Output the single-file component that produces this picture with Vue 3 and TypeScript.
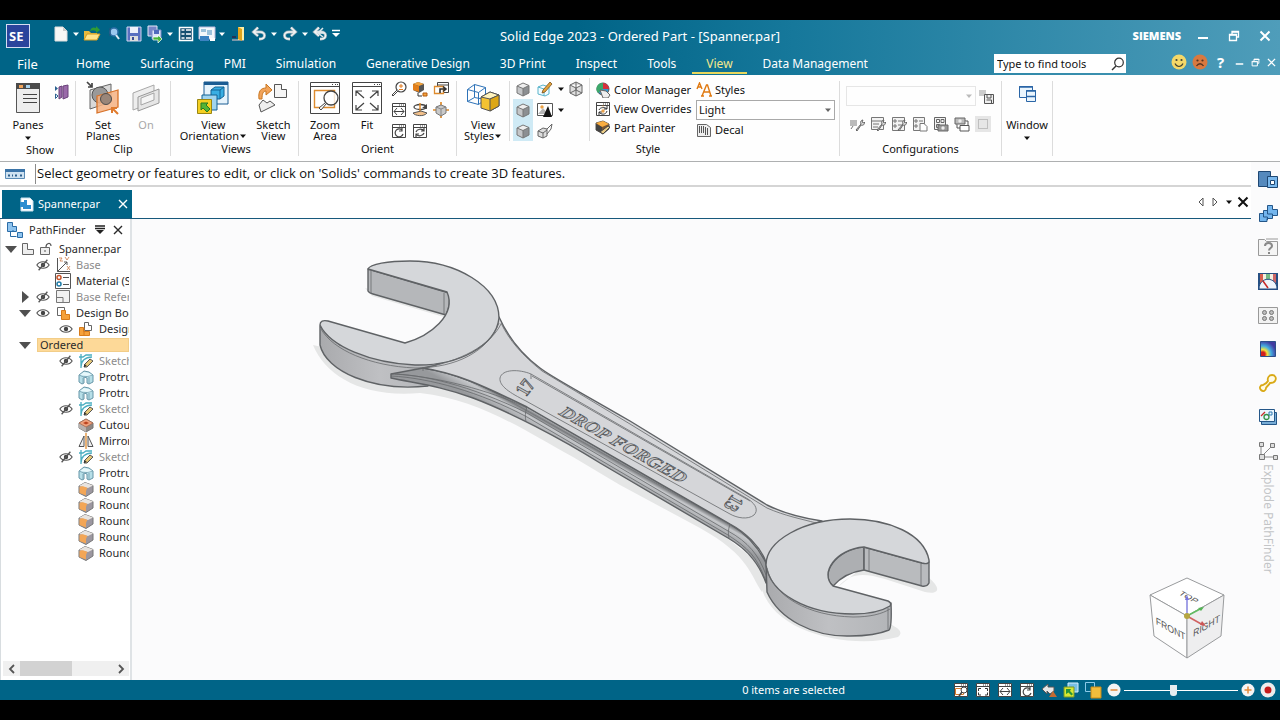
<script setup lang="ts">
import { h, ref } from 'vue'

type Art = [number, number, string]

const win = (inner: string) =>
  `<path d="M1.5 1.5h13v13h-13z" fill="#fff" stroke="#444"/><path d="M2 4.5h12" stroke="#444"/><path d="M8 3h1M10 3h1M12 3h1" stroke="#444"/>${inner}`
const cube = (top: string, left: string, right: string, line = '#777') =>
  `<path d="M2 5l6-3 6 2.500-6 3z" fill="${top}"/><path d="M2 5l6 2.500V15l-6-3z" fill="${left}"/><path d="M14 4.500V12l-6 3V7.500z" fill="${right}"/><path d="M2 5l6-3 6 2.500V12l-6 3-6-3zM2 5l6 2.500 6-3M8 7.500V15" fill="none" stroke="${line}"/>`
const plainCube = cube('#eee', '#c4c6c8', '#8c8f92')
const wrench = '<path d="M7 14l5-6c-1-2 0-4 2-4l-1 2 2 1 1-1c0 2-2 4-4 3l-4 6z" fill="#ddd" stroke="#666"/>'
const eye = '<path d="M1 8c3-5 11-5 14 0-3 5-11 5-14 0z" fill="#fff" stroke="#555" stroke-width="1.300"/><circle cx="8" cy="8" r="2.500" fill="#444"/>'
const doc = '<path d="M2 1h8l4 4v10H2z" fill="#f8f8f6" stroke="#ddd"/><path d="M10 1v4h4" fill="#ccc"/>'
const arrowUndo = '<path d="M3 6h6c6 0 6 7 0 7H8M7 1.500L2.500 6 7 10" fill="none" stroke="#9fb3bd" stroke-width="3"/><path d="M3 6h6c6 0 6 7 0 7H8M7 1.500L2.500 6 7 10" fill="none" stroke="#f4f4f4" stroke-width="1.400"/>'

const art: Record<string, Art> = {
  down: [8, 8, '<path d="M1 2.500h6L4 6z" fill="currentColor"/>'],
  custom: [10, 10, '<path d="M1 1.500h8" stroke="#fff" stroke-width="1.500"/><path d="M1 4h8L5 8z" fill="#fff"/>'],
  blank: [16, 16, doc],
  open: [18, 18, '<path d="M1 15V6h5l2 2h6v7z" fill="#e7b93d"/><path d="M1 15l3-6h13l-3 6z" fill="#ffe48a" stroke="#d39b21"/><path d="M7 6c1-4 4-4 6-3V1l4 4-4 3V6c-2-1-4-1-6 0z" fill="#2f9b35"/>'],
  find: [16, 16, '<circle cx="9" cy="6" r="4" fill="#9cc9ef" stroke="#2e6fa8" stroke-width="1.500"/><path d="M11 9l3 4" stroke="#e0edf6" stroke-width="2"/><path d="M5 2v8" stroke="#28537c"/>'],
  save: [16, 16, '<path d="M1 1h14v14H1z" fill="#5a6fc0" stroke="#d2d8f0"/><path d="M4 1h8v6H4z" fill="#eef0fa"/><path d="M4 10h8v5H4z" fill="#ddd"/><path d="M6 11h2v3H6z" fill="#3c4c94"/>'],
  copies: [18, 18, '<path d="M2 1h9v10H2z" fill="#7686c8" stroke="#e4e7f5"/><path d="M6 5h9v9H6z" fill="#dfe5f8" stroke="#7d8cc8"/><path d="M8 5h5v4H8z" fill="#516bbd"/><path d="M7 12h5v-2l4 4-4 4v-3H7z" fill="#48b53b" stroke="#fff" stroke-width=".7"/>'],
  list: [16, 16, '<path d="M1.500 1.500h13v13h-13z" fill="#164f70" stroke="#fff" stroke-width="1.500"/><path d="M3.500 4h3M3.500 8h3M3.500 12h3M8 4h5M8 8h5M8 12h5" stroke="#fff" stroke-width="1.500"/>'],
  layout: [18, 16, '<path d="M1 1h16v12H1z" fill="#f4f8fb" stroke="#bbd"/><path d="M3 3h5v3H3zM9 4h5v5H9z" fill="#9dc3dc"/><path d="M2 10h9v5H2z" fill="#3b83c2"/><path d="M12 12h5v3h-5z" fill="#fff"/>'],
  exit: [16, 16, '<path d="M2 13h6V2h6v13H2z" fill="#7997a8"/><path d="M8 1h6v13H8z" fill="#fff0a5"/><path d="M8 1l4 2v12l-4-2z" fill="#dfa51c"/><path d="M2 11l4 0" stroke="#235" stroke-width="2"/>'],
  undo: [16, 16, arrowUndo],
  redo: [16, 16, `<g transform="translate(16 0) scale(-1 1)">${arrowUndo}</g>`],
  undoall: [18, 16, `${arrowUndo}<path d="M11 2L6 7h7M6 7l5 4" fill="none" stroke="#dfe7eb" stroke-width="1.500"/>`],
  min: [12, 12, '<path d="M1 8h10" stroke="#fff" stroke-width="2"/>'],
  restore: [12, 12, '<path d="M1.500 4.500h7v6h-7zM4 4V1.500h6.500V7H9" fill="none" stroke="#fff" stroke-width="1.300"/><path d="M1 5h8M4 2h7" stroke="#fff" stroke-width="1.500"/>'],
  close: [12, 12, '<path d="M1.500 1.500l9 9m0-9l-9 9" stroke="currentColor" stroke-width="2"/>'],
  thinx: [10, 10, '<path d="M1 1l8 8m0-8L1 9" stroke="currentColor" stroke-width="1.400"/>'],
  happy: [16, 16, '<circle cx="8" cy="8" r="7.500" fill="#f5d868"/><circle cx="5.500" cy="6" r="1.100" fill="#443"/><circle cx="10.500" cy="6" r="1.100" fill="#443"/><path d="M4 9.500c2 4 6 4 8 0" fill="none" stroke="#443" stroke-width="1.200"/>'],
  sad: [16, 16, '<circle cx="8" cy="8" r="7.500" fill="#d9793f"/><circle cx="5.500" cy="6.500" r="1.100" fill="#532"/><circle cx="10.500" cy="6.500" r="1.100" fill="#532"/><path d="M4.500 12c2-3 5-3 7 0" fill="none" stroke="#532" stroke-width="1.300"/>'],
  lens: [14, 14, '<circle cx="8" cy="5.500" r="4.300" fill="none" stroke="#333" stroke-width="1.200"/><path d="M5 9l-4 4" stroke="#333" stroke-width="1.400"/>'],
  panes: [26, 32, '<path d="M1.500 1.500h23v29h-23z" fill="#eee" stroke="#555"/><path d="M1 1h24v6H1z" fill="#4b4b4b"/><path d="M4 3h4v3H4z" fill="#f0a35a"/><path d="M11 3h4v3h-4z" fill="#a9d3ef"/><path d="M8 12.500h14M8 16.500h14M8 20.500h14" stroke="#444"/>'],
  swap: [16, 16, '<path d="M5 3l3-1v11l-3 2zM9 2l5-1v12l-5 2z" fill="#9a6aa9" stroke="#6a427b"/><path d="M1 2v5l3-2.500z" fill="#2b6290"/><path d="M1.500 10v4.500L4 12z" fill="#fff" stroke="#2b6290"/>'],
  planes: [34, 34, '<path d="M4 9l21-6v18L4 28z" fill="#d9d9d9" stroke="#666"/><ellipse cx="14" cy="14" rx="8" ry="8" fill="#999" stroke="#555"/><path d="M11 15l21-6v17L11 32z" fill="#f5b183" fill-opacity=".85" stroke="#d8732a" stroke-width="1.300"/><circle cx="20" cy="18" r="5.500" fill="#9a8679" stroke="#4d4d4d"/><path d="M1 1l5 5M6 2v4H2" fill="none" stroke="#444" stroke-width="1.700"/><path d="M32 33l-5-5M26 32v-5h5" fill="none" stroke="#e07b2e" stroke-width="2"/>'],
  planeoff: [30, 32, '<path d="M2 11L23 3v17L2 28z" fill="#eee" stroke="#a8a8a8"/><path d="M7 15l21-8v14L7 29z" fill="#e6e6e6" stroke="#999"/><path d="M10 16l13-5v7l-13 5z" fill="#f5f5f5" stroke="#a5a5a5"/>'],
  orient: [34, 34, '<path d="M8 1h24v22H8z" fill="#e6f3fc" stroke="#1b5c93"/><path d="M8 1h24v3H8z" fill="#1b5c93"/><path d="M15 9l4-3h9v9l-4 3h-9z" fill="#39aee3" stroke="#126395"/><path d="M15 9h9v9M24 9l4-3" stroke="#126395" fill="none"/><path d="M6 14h15v15H6z" fill="#a0d4ef" stroke="#126395"/><path d="M1.500 18.500h14v14h-14z" fill="#f4cf22" stroke="#9a8612"/><path d="M5 22h7l-2 2 4 4-3 3-4-4-2 2z" fill="#54b436" stroke="#277a23"/>'],
  sketchview: [32, 32, '<path d="M17.500 2.500h7v5h5v8h-12z" fill="#f5f5f5" stroke="#555"/><path d="M2 23l4-5 4 3 3-2 5 4-14 7z" fill="#eee" stroke="#555"/><path d="M2 17C1 9 4 6 9 6V2l6 6-6 5v-4c-3 0-4 3-4 8z" fill="#f2a45b" stroke="#c97620"/>'],
  zoomarea: [32, 34, '<path d="M1.500 1.500h29v31h-29z" fill="#fff" stroke="#444"/><path d="M2 5.500h28M23 3.500h1M26 3.500h1M28 3.500h1" stroke="#444"/><path d="M5.500 9.500h20v17h-20z" fill="none" stroke="#dd8b2e" stroke-width="1.400"/><circle cx="22" cy="17" r="7" fill="#fff" fill-opacity=".8" stroke="#444" stroke-width="1.300"/><path d="M17 23l-5 6-2-2 6-5" fill="#fff" stroke="#444"/>'],
  fit: [32, 34, '<path d="M1.500 1.500h29v31h-29z" fill="#fff" stroke="#444"/><path d="M2 5.500h28M23 3.500h1M26 3.500h1M28 3.500h1" stroke="#444"/><path d="M5 10l8 7M5 15v-5h6M27 10l-8 7M21 10h6v5M5 29l8-7M5 24v5h6M27 29l-8-7M21 29h6v-5" fill="none" stroke="#444" stroke-width="1.200"/>'],
  zoom: [16, 16, '<circle cx="10" cy="6" r="5" fill="#fff" stroke="#444" stroke-width="1.200"/><path d="M7 10l-5 5-1-1 5-5" fill="#fff" stroke="#444"/><path d="M8 5h4M10 3v4M8 8.500h4" stroke="#e07b20"/>'],
  rotcube: [16, 16, '<path d="M1 3l5-2 6 2v6l-5 3-6-3z" fill="#555"/><path d="M1 3l5-2 6 2-5 2z" fill="#f6a33b"/><path d="M1 3l6 2v6l-6-2z" fill="#e37e19"/><path d="M11 12h4v3h-4z" fill="#f6a33b" stroke="#b35b11"/><path d="M6 12v3h4" fill="none" stroke="#333"/>'],
  winarrow: [16, 16, '<path d="M4.500 1.500h11v10h-11z" fill="#fff" stroke="#444"/><path d="M5 4h10" stroke="#444"/><path d="M1.500 5.500h9v7h-9z" fill="#fff" stroke="#dd8b2e" stroke-width="1.300"/><path d="M7 12V8h5M10 5.500l3 2.500-3 2.500" fill="none" stroke="#333" stroke-width="1.600"/>'],
  pan: [16, 16, win('<path d="M6 6L3 9.500 6 13M10 6l3 3.500L10 13M3 9.500h10" fill="none" stroke="#444"/>')],
  spin: [16, 16, '<ellipse cx="8" cy="5" rx="6" ry="2.500" fill="none" stroke="#444" stroke-width="1.300"/><path d="M8 1v12" stroke="#e08a28" stroke-width="1.500"/><path d="M1 11c2 3 11 4 14 0l-6-2z" fill="#f2c08a" stroke="#555"/><path d="M15 2v5l-5-1z" fill="#444"/>'],
  look: [16, 16, '<path d="M8 0v3M8 13v3M0 8h3M13 8h3" stroke="#e08a28" stroke-width="1.700"/><path d="M3 5l5-2 5 2v6l-5 3-5-3z" fill="#c9c9c9" stroke="#777"/><path d="M3 5l5 2 5-2M8 7v7" fill="none" stroke="#888"/>'],
  rot: [16, 16, win('<path d="M11 7a4 4 0 1 0 1 4M11 5v3H8" fill="none" stroke="#444" stroke-width="1.200"/>')],
  refresh: [16, 16, win('<path d="M4 9c1-3 6-4 8-1M12 5v3H9M12 10c-1 3-6 4-8 1M4 14v-3h3" fill="none" stroke="#444" stroke-width="1.200"/>')],
  viewstyles: [34, 32, '<path d="M1.500 7.500l7-5 11 3v12l-7 5-11-3zM1.500 7.500l11 3 7-5M12.500 10.500v12M8.500 2.500v13l-7 4M8.500 15.500l11 2" fill="none" stroke="#2e73b8"/><path d="M15 15l9-5 9 3v11l-9 5-9-3z" fill="#f4c332" stroke="#555"/><path d="M15 15l9-5 9 3-9 4z" fill="#fff3bd" stroke="#555"/><path d="M24 17v12l9-5V13z" fill="#dda715" stroke="#555"/>'],
  cube: [16, 16, plainCube],
  wire: [16, 16, '<path d="M2 4l6-3 6 3v8l-6 3-6-3zM2 4l6 3 6-3M8 7v8M2 12l6-3 6 3M8 1v8" fill="#ccc" fill-opacity=".6" stroke="#666"/>'],
  painted: [16, 16, '<path d="M1 6l5-2 6 2v7l-4 2-7-2zM1 6l6 2 5-2M7 8v7" fill="#f2fbff" stroke="#5bb5cc"/><path d="M6 9l7-8 2 2-7 8-3 1z" fill="#e3a33d" stroke="#79501c" stroke-width=".8"/>'],
  scene: [16, 16, '<path d="M.5 1.500h15v12H.5z" fill="#fff" stroke="#555"/><circle cx="5" cy="5" r="1.700" fill="#eda143"/><path d="M1 12l5-6 5 6z" fill="#b8b8b8"/><path d="M6 15l5-11 4 11z" fill="#151515"/>'],
  section: [16, 16, '<path d="M1 8l5-3 4 1v7l-4 2-5-2z" fill="#ddd" stroke="#666"/><path d="M1 8l5 2 4-3M6 10v5M10 6l5-5-1 5-4 5" fill="none" stroke="#666"/>'],
  palette: [16, 16, '<circle cx="8" cy="7" r="6" fill="#3b96c9" stroke="#555"/><path d="M8 7V1a6 6 0 0 1 6 6z" fill="#d8303b"/><path d="M8 7L3 11A6 6 0 0 1 8 1z" fill="#3ca86b"/><path d="M5 8l6 1 4 4-2 3H8z" fill="#eee" stroke="#666"/>'],
  overrides: [16, 16, win('<path d="M4 9c1-3 6-3 8-1M12 5v3H9M12 10c-1 4-6 4-8 1M4 14v-3h3" fill="none" stroke="#333"/><path d="M8 4.500v1" stroke="#e08a28"/><circle cx="8" cy="10" r="1.700" fill="#e9a24c"/>')],
  painter: [16, 16, '<path d="M1 3l7-2 6 3v5l-6 5-7-4z" fill="#7c5630" stroke="#555"/><path d="M1 3l7-2 6 3-7 3z" fill="#f9ad40"/><path d="M1 4l6 3v6l-6-3z" fill="#434343"/><path d="M5 12l8-6 2 1-7 7z" fill="#e9cc87" stroke="#444"/>'],
  aa: [16, 16, '<path d="M1 7l2.500-6L6 7M2 5h3M6 14l4.500-11h1L15 14M8 10h5.500M5 14h3M13 14h3" fill="none" stroke="#e07a12" stroke-width="1.400"/>'],
  decal: [16, 16, '<path d="M1.500 2.500h9l4 3v9h-13z" fill="#eee" stroke="#666"/><path d="M3.500 4v7M5.500 4v7M7.500 4v7M9.500 5v8M11.500 6v7" stroke="#555"/>'],
  cfgsave: [16, 16, '<path d="M0 1h7v6H0z" fill="#ccc"/><path d="M5.500 5.500h9v9h-9z" fill="#eee" stroke="#555"/><path d="M8 6v3h4V6M7.500 11h5v3" fill="none" stroke="#555"/>'],
  cfg1: [16, 16, `<path d="M1 4h7v6H1z" fill="#bbb"/>${wrench}<path d="M2 13l2-3" stroke="#777"/>`],
  cfg2: [16, 16, `<path d="M1.500 1.500h12v12h-12zM1 5h13M3 8h6M3 11h5" fill="#f3f3f3" stroke="#777"/>${wrench}`],
  cfg3: [16, 16, `<path d="M1.500 1.500h12v13h-12zM3 4h2v2H3zM3 9h2v2H3zM7 5h5M7 9h5" fill="#f3f3f3" stroke="#777"/>${wrench}`],
  cfg4: [16, 16, '<path d="M1.500 1.500h11v13h-11zM3 4h2v2H3zM3 9h2v2H3zM7 5h4" fill="#f3f3f3" stroke="#777"/><path d="M8 7.500h4l3 3V15H8z" fill="#fff" stroke="#777"/>'],
  cfg5: [16, 16, '<path d="M1.500 1.500h11v12h-11zM3.500 3.500h3v3h-3zM8 3.500h3v3H8zM3.500 8.500h3v3h-3z" fill="#f3f3f3" stroke="#666"/><path d="M5 9h10v6H5z" fill="#999" stroke="#666"/><circle cx="10" cy="12" r="1.700" fill="#eee"/>'],
  cfg6: [16, 16, '<path d="M1 2h10v6H1z" fill="#bbb" stroke="#666"/><circle cx="6" cy="5" r="1.700" fill="#eee"/><path d="M6 9.500h9V15H6zM3 8v4h3M11 5h3v4" fill="#fff" stroke="#555"/>'],
  cfg7: [16, 16, '<path d="M0 0h16v16H0z" fill="#e6e6e6"/><path d="M3.500 3.500h9v9h-9z" fill="none" stroke="#999" stroke-dasharray="1 1"/>'],
  windows: [18, 18, '<path d="M1.500 1.500h13v11h-13z" fill="#eaf5fd" stroke="#2a65a6"/><path d="M1 2h14" stroke="#2a65a6" stroke-width="1.500"/><path d="M8.500 5.500h9v11h-9z" fill="#eaf5fd" stroke="#2a65a6"/><path d="M8 6h10M8 11.500h10" stroke="#2a65a6" stroke-width="1.500"/>'],
  solidbar: [20, 10, '<path d="M.5.500h19v9H.5z" fill="#cfe2f1" stroke="#5a8bb5"/><path d="M0 0h20v3H0z" fill="#3b74a8"/><path d="M3 6.500h2M7 6.500h1M10 6.500h2M15 6.500h2" stroke="#2d5e8c" stroke-width="2"/>'],
  partdoc: [14, 15, '<path d="M1 1h9l3 3v10H1z" fill="#fff" stroke="#c8dfec"/><path d="M0 5h4V3h3v5h4v4H3v-2H0z" fill="#2c8dd0"/>'],
  pathfinder: [18, 18, '<path d="M1.500 1.500h5v4h4v5h-9z" fill="#8fc4ef" stroke="#2b6ca6"/><path d="M4.500 11v4.500h6M7 10v-1" stroke="#2b6ca6" fill="none"/><path d="M11.500 11.500h5v5h-5z" fill="#8fc4ef" stroke="#2b6ca6"/>'],
  menu: [12, 10, '<path d="M1 1h10M1 3.500h10" stroke="#222" stroke-width="1.300"/><path d="M2 5h8L6 9z" fill="#222"/>'],
  open6: [12, 12, '<path d="M0 3h12L6 10z" fill="#505050"/>'],
  shut6: [12, 12, '<path d="M3 0v12l7-6z" fill="#505050"/>'],
  part: [14, 14, '<path d="M1.500 1.500h5v6h6v5h-11z" fill="#eee" stroke="#666"/>'],
  lock: [14, 14, '<path d="M1.500 5.500h9v7h-9z" fill="#eee" stroke="#666"/><path d="M7 5c0-4 5-5 5-1M5 9h2" fill="none" stroke="#555" stroke-width="1.200"/>'],
  eye: [14, 14, `<g transform="scale(.875)">${eye}</g>`],
  hidden: [14, 14, `<g transform="scale(.875)">${eye}<path d="M3 14L13 2" stroke="#555" stroke-width="1.500"/></g>`],
  base: [16, 16, '<path d="M2.500 1v13.500H15M2.500 14.500L12 5M9 5h3v3" fill="none" stroke="#555"/><path d="M4 1h3L5 4h3M10 0l2 3 2-3M12 9l3 4M15 9l-3 4" fill="none" stroke="#cc7c4a" stroke-width=".8"/>'],
  material: [16, 16, '<path d="M.5.500h15v15H.5z" fill="#fff" stroke="#555"/><circle cx="4" cy="4.500" r="2" fill="none" stroke="#c8552c" stroke-width="1.500"/><circle cx="4" cy="11" r="2" fill="none" stroke="#1e7ca7" stroke-width="1.500"/><path d="M8 4.500h6M8 11.500h6" stroke="#555"/>'],
  refs: [16, 16, '<path d="M1.500 1.500h13v12h-13z" fill="#f1f1f1" stroke="#777"/><path d="M2 8.500h6v5" fill="none" stroke="#777"/>'],
  bodies: [16, 16, '<path d="M2.500 2.500h7v8h-7z" fill="#fff" stroke="#666"/><path d="M6.500 5.500h4v4h4v5h-8z" fill="#f5a13a" stroke="#d77b1b"/>'],
  body: [16, 16, '<path d="M6.500 1.500h4v3h3v5h-7z" fill="#fff" stroke="#666"/><path d="M1.500 6.500h4v4h6v4h-10z" fill="#f5a13a" stroke="#d77b1b"/><path d="M6 7v7" stroke="#d77b1b"/>'],
  sketch: [16, 16, '<path d="M3 1v14M1 4h4l3-2h6M3 14C3 8 7 4 14 4" fill="none" stroke="#4baec1" stroke-width="1.300"/><path d="M7 11l5-5 3 2-6 6-3 0z" fill="#e5c778" stroke="#555"/><path d="M6 14l0-3 3 2z" fill="#333"/>'],
  protrude: [16, 16, '<path d="M1 6l5-4 5 1 4 3v7l-4 2-2-1V9L6 8v6l-2 1-3-2z" fill="#b7dfe8" stroke="#6796a8"/><path d="M1 6l5 2 9-2M5 9v6M11 8v7" fill="none" stroke="#7fa9b8"/><path d="M2 6l4-3 5 1 3 2-5 1z" fill="#e7f8fb"/>'],
  cutout: [16, 16, '<path d="M1 6l7-4 7 4v5l-7 4-7-4z" fill="#8f8783" stroke="#777"/><path d="M1 6l7 4v5l-7-4z" fill="#b7b1ae"/><path d="M1 6l7-4 7 4-7 4z" fill="#f0a17d" stroke="#a5664a" stroke-width=".7"/><path d="M5 6l3-1.500L11 6 8 7.500z" fill="#bb4420"/>'],
  mirror: [16, 16, '<path d="M6 3v10.500H1zM10 3v10.500h5z" fill="#eee" stroke="#555"/><path d="M8 0v16" stroke="#df8b2f" stroke-width="1.300"/>'],
  round: [16, 16, '<path d="M1 5l6-3.500 8 3V11l-7 4.500L1 12z" fill="#9c97a0" stroke="#777"/><path d="M1 5l6-3.500 8 3-5 2.500z" fill="#e8e4e0"/><path d="M1.500 6c2-1.500 4-1 8 1-2 2-1.500 5-1.500 7.500L1.500 12z" fill="#f3a656"/>'],
  left: [8, 10, '<path d="M6 1L2 5l4 4" fill="none" stroke="#555" stroke-width="1.800"/>'],
  right: [8, 10, '<path d="M2 1l4 4-4 4" fill="none" stroke="#555" stroke-width="1.800"/>'],
  prev: [8, 10, '<path d="M6 1v8L2 5z" fill="#fff" stroke="#555"/>'],
  next: [8, 10, '<path d="M2 1v8l4-4z" fill="#fff" stroke="#555"/>'],
  rail1: [20, 18, '<path d="M.5 1.500h12v15H.5z" fill="#5589bd" stroke="#1e4773"/><path d="M9.500 6.500h10v11h-10z" fill="#79b7ec" stroke="#1e4773"/><path d="M12.500 10.500h4v4h-4z" fill="#fff" stroke="#1e4773"/>'],
  rail2: [20, 18, '<path d="M1.500 9.500h4v-3h4v-5h5v4h5v6h-5v3H9v3H1.500z" fill="#73b5ed" stroke="#245688"/><path d="M5.500 9v4h4v3M9.500 6v4h5v4" fill="none" stroke="#245688"/>'],
  rail3: [20, 18, '<path d="M.5 17.500V1.500h6l2 2h11v14z" fill="#f4f4f4" stroke="#999"/><path d="M8 1h12" stroke="#999"/><path d="M7 8c0-4 7-4 7 0 0 2-3 2-3 4.500M11 14v2" fill="none" stroke="#888" stroke-width="2"/>'],
  rail4: [20, 18, '<path d="M0 1h20v17H0z" fill="#264f83"/><path d="M2 2h3v9H2z" fill="#d85e4f"/><path d="M5 2h3v6H5z" fill="#f4eee1"/><path d="M8 2h4v5H8z" fill="#75b984"/><path d="M12 2h3v6h-3z" fill="#f4eee1"/><path d="M15 2h3v9h-3z" fill="#c66"/><path d="M1 17c0-13 18-13 18 0z" fill="#eef5fc" stroke="#264f83"/><path d="M10 16L5 9" stroke="#c62626" stroke-width="1.500"/>'],
  rail5: [20, 18, '<path d="M.5 1.500h19v16H.5z" fill="#f2f2f2" stroke="#999"/><g fill="#bbb" stroke="#777"><circle cx="6.500" cy="6.500" r="2"/><circle cx="13.500" cy="6.500" r="2"/><circle cx="6.500" cy="12.500" r="2"/><circle cx="13.500" cy="12.500" r="2"/></g>'],
  rail6: [16, 16, '<defs><radialGradient id="heat" cx="15%" cy="85%" r="100%"><stop offset=".15" stop-color="#d0201f"/><stop offset=".3" stop-color="#f7e43a"/><stop offset=".55" stop-color="#43aee2"/><stop offset=".9" stop-color="#413aa0"/></radialGradient></defs><path d="M.5.500h15v15H.5z" fill="url(#heat)" stroke="#2c4f89"/>'],
  rail7: [18, 18, '<path d="M9 7c-1-3 1-6 4-6 3 0 5 3 3 6-1 2-3 2-5 2-1 2-3 3-4 5 0 3-3 4-5 2-2-2-1-5 2-5 2-1 4-2 5-4z" fill="#fffbe5" stroke="#d9a916" stroke-width="1.800"/>'],
  rail8: [20, 18, '<path d="M3.500 4.500h15v12h-15z" fill="#77acd6" stroke="#245688"/><path d="M1.500 1.500h15v12h-15z" fill="#eaf6ff" stroke="#245688"/><path d="M3 8l4-4" stroke="#c92d2d" stroke-width="1.300"/><circle cx="8.500" cy="9" r="2.500" fill="none" stroke="#349247" stroke-width="1.300"/><path d="M11 4h3v3h-3z" fill="none" stroke="#2f7bb3"/>'],
  rail9: [20, 18, '<path d="M3 4v11h14M3 15l11-11" fill="none" stroke="#888"/><g fill="#ddd" stroke="#777"><path d="M1.500.500h4v4h-4zM12.500 1.500h4v4h-4zM1.500 12.500h5v5h-5zM15.500 13.500h4v4h-4z"/></g>'],
  szoom: [16, 16, win('<path d="M2.500 6.500h8v6h-8z" fill="none" stroke="#d77b2b"/><circle cx="11" cy="8" r="3" fill="#fff" stroke="#444"/><path d="M9 10l-3 4" stroke="#444" stroke-width="1.500"/>')],
  sfit: [16, 16, win('<path d="M3.500 9V6.500H6M10 6.500h2.500V9M3.500 10.500V13H6M12.500 10.500V13H10" fill="none" stroke="#333"/>')],
  sback: [16, 16, '<path d="M1 7l6-5v3h6v4l-4 3-3-3v3z" fill="#e8e8e8" stroke="#555"/><path d="M12 9l4 6H8z" fill="#c26b32"/>'],
  sorient: [16, 16, '<path d="M5 1h10v9H5z" fill="#77bfe4" stroke="#d8f0ff"/><path d="M1 5h10v10H1z" fill="#d7e832" stroke="#779629"/><path d="M3 7h5L7 9l3 3-1.500 1.500-3-3L3 12z" fill="#289439"/>'],
  sstyle: [18, 18, '<path d="M1.500 1.500h9v9h-9z" fill="none" stroke="#8ac9e8"/><path d="M7 6h10v11H7z" fill="#f0bd3c" stroke="#c98a14"/>'],
  minus: [14, 14, '<circle cx="7" cy="7" r="6.500" fill="#f4f4f4"/><path d="M3.500 7h7" stroke="#e28a3a" stroke-width="1.500"/>'],
  plus: [14, 14, '<circle cx="7" cy="7" r="6.500" fill="#f4f4f4"/><path d="M3.500 7h7M7 3.500v7" stroke="#e28a3a" stroke-width="1.500"/>'],
  record: [16, 16, '<circle cx="8" cy="8" r="7.500" fill="#ececec"/><circle cx="8" cy="8" r="3.500" fill="#c31b1b"/>']
}

const Icon = (props: { n: string }) => {
  const [w, hgt, markup] = art[props.n]
  return h('svg', { width: w, height: hgt, viewBox: `0 0 ${w} ${hgt}`, innerHTML: markup, 'aria-hidden': 'true' })
}
Icon.props = ['n']

const quick = [
  ['blank', 'New'], ['down', 'New options'], ['open', 'Open'], ['find', 'Find'], ['save', 'Save'], ['copies', 'Save all'],
  ['down', 'Save options'], ['list', 'Properties'], ['layout', 'Layout'], ['down', 'Layout options'], ['exit', 'Close'],
  ['undo', 'Undo'], ['down', 'Undo list'], ['redo', 'Redo'], ['down', 'Redo list'], ['undoall', 'Repeat'], ['custom', 'Customize']
]
const tabs = ['Home', 'Surfacing', 'PMI', 'Simulation', 'Generative Design', '3D Print', 'Inspect', 'Tools', 'View', 'Data Management']
const orientTools = ['zoom', 'rotcube', 'winarrow', 'pan', 'spin', 'look', 'rot', 'refresh']
const configTools = ['cfg1', 'cfg2', 'cfg3', 'cfg4', 'cfg5', 'cfg6', 'cfg7']
const rail = ['rail1', 'rail2', 'rail3', 'rail4', 'rail5', 'rail6', 'rail7', 'rail8', 'rail9']
const statusTools = ['szoom', 'sfit', 'pan', 'rot', 'sback', 'sorient', 'sstyle']

interface Node { t: string; i?: string; d: number; e?: string; x?: string; off?: boolean; hot?: boolean }
const sk: Node = { t: 'Sketch', i: 'sketch', d: 3, e: 'hidden', off: true }
const pr: Node = { t: 'Protrusion', i: 'protrude', d: 3 }
const ro: Node = { t: 'Round', i: 'round', d: 3 }
const tree: Node[] = [
  { t: 'Base', i: 'base', d: 2, e: 'hidden', off: true },
  { t: 'Material (Steel)', i: 'material', d: 2 },
  { t: 'Base Reference Planes', i: 'refs', d: 2, e: 'hidden', x: 'shut6', off: true },
  { t: 'Design Bodies', i: 'bodies', d: 2, e: 'eye', x: 'open6' },
  { t: 'Design Body', i: 'body', d: 3, e: 'eye' },
  { t: 'Ordered', d: 1, x: 'open6', hot: true },
  sk, pr, pr, sk, { t: 'Cutout', i: 'cutout', d: 3 }, { t: 'Mirror', i: 'mirror', d: 3 }, sk, pr, ro, ro, ro, ro, ro
]

const query = ref('Type to find tools')
const zoomLevel = ref(43)
const style = ref('Light')
</script>

<template>
  <div class="app">
    <header class="head">
      <div class="titlebar">
        <div class="quick">
          <button class="logo" aria-label="Application menu">SE</button>
          <button v-for="(q, k) in quick" :key="k" :class="q[0] === 'down' || q[0] === 'custom' ? 'qc' : 'qb'" :aria-label="q[1]"><Icon :n="q[0]" /></button>
        </div>
        <h1>Solid Edge 2023 - Ordered Part - [Spanner.par]</h1>
        <div class="wctl">
          <strong>SIEMENS</strong>
          <button aria-label="Minimize"><Icon n="min" /></button>
          <button aria-label="Restore"><Icon n="restore" /></button>
          <button aria-label="Close"><Icon n="close" /></button>
        </div>
      </div>
      <nav class="tabs">
        <button class="file">File</button>
        <button v-for="t in tabs" :key="t" class="tab" :class="{ on: t === 'View' }">{{ t }}</button>
        <label class="search"><input v-model="query" type="text" aria-label="Find tools" /><Icon n="lens" /></label>
        <div class="help">
          <button aria-label="Like"><Icon n="happy" /></button>
          <button aria-label="Dislike"><Icon n="sad" /></button>
          <button aria-label="Help" class="q">?</button>
          <button aria-label="Minimize document" class="sm"><Icon n="min" /></button>
          <button aria-label="Restore document" class="sm"><Icon n="restore" /></button>
          <button aria-label="Close document" class="sm"><Icon n="thinx" /></button>
        </div>
      </nav>
    </header>

    <div class="ribbon">
      <section class="group show">
        <div class="body">
          <button class="big"><Icon n="panes" /><span>Panes</span><Icon n="down" class="below" /></button>
          <button class="tiny" aria-label="Swap panes"><Icon n="swap" /></button>
        </div>
        <h2>Show</h2>
      </section>
      <section class="group clip">
        <div class="body">
          <button class="big"><Icon n="planes" /><span>Set<br />Planes</span></button>
          <button class="big dim" disabled><Icon n="planeoff" /><span>On</span></button>
        </div>
        <h2>Clip</h2>
      </section>
      <section class="group views">
        <div class="body">
          <button class="big wide"><Icon n="orient" /><span>View<br />Orientation<Icon n="down" /></span></button>
          <button class="big"><Icon n="sketchview" /><span>Sketch<br />View</span></button>
        </div>
        <h2>Views</h2>
      </section>
      <section class="group orient">
        <div class="body">
          <button class="big"><Icon n="zoomarea" /><span>Zoom<br />Area</span></button>
          <button class="big"><Icon n="fit" /><span>Fit</span></button>
          <div class="grid3">
            <button v-for="o in orientTools" :key="o" class="tiny" :aria-label="o"><Icon :n="o" /></button>
          </div>
        </div>
        <h2>Orient</h2>
      </section>
      <section class="group style">
        <div class="body">
          <button class="big vs"><Icon n="viewstyles" /><span>View<br />Styles<Icon n="down" /></span></button>
          <div class="cubes">
            <button class="tiny" aria-label="Shaded"><Icon n="cube" /></button>
            <button class="tiny" aria-label="Visible edges"><Icon n="painted" /></button>
            <button class="car" aria-label="Edge options"><Icon n="down" /></button>
            <button class="tiny" aria-label="Wireframe"><Icon n="wire" /></button>
            <button class="tiny sel" aria-label="Drop shadow"><Icon n="cube" /></button>
            <button class="tiny" aria-label="Background"><Icon n="scene" /></button>
            <button class="car" aria-label="Background options"><Icon n="down" /></button>
            <i></i>
            <button class="tiny sel" aria-label="Floor shadow"><Icon n="cube" /></button>
            <button class="tiny" aria-label="Perspective"><Icon n="section" /></button>
          </div>
          <div class="rows left">
            <button><Icon n="palette" />Color Manager</button>
            <button><Icon n="overrides" />View Overrides</button>
            <button><Icon n="painter" />Part Painter</button>
          </div>
          <div class="rows">
            <button><Icon n="aa" />Styles</button>
            <div class="pick"><select v-model="style" aria-label="Style"><option>Light</option></select><Icon n="down" /></div>
            <button><Icon n="decal" />Decal</button>
          </div>
        </div>
        <h2>Style</h2>
      </section>
      <section class="group config">
        <div class="body">
          <div class="crow">
            <div class="pick off"><select disabled aria-label="Configuration"><option></option></select><Icon n="down" /></div>
            <button class="tiny" aria-label="Save configuration"><Icon n="cfgsave" /></button>
          </div>
          <div class="crow tools">
            <button v-for="c in configTools" :key="c" class="tiny" :aria-label="c"><Icon :n="c" /></button>
          </div>
        </div>
        <h2>Configurations</h2>
      </section>
      <section class="group windowg">
        <div class="body">
          <button class="big"><Icon n="windows" class="wi" /><span>Window</span><Icon n="down" class="below" /></button>
        </div>
      </section>
    </div>

    <div class="middle">
      <div class="work">
        <div class="prompt"><Icon n="solidbar" /><p>Select geometry or features to edit, or click on 'Solids' commands to create 3D features.</p></div>
        <div class="docs">
          <div class="doctab"><Icon n="partdoc" /><span>Spanner.par</span><button aria-label="Close Spanner.par"><Icon n="thinx" /></button></div>
          <div class="docnav">
            <button aria-label="Previous"><Icon n="prev" /></button>
            <button aria-label="Next"><Icon n="next" /></button>
            <button aria-label="Documents"><Icon n="down" /></button>
            <button aria-label="Close view"><Icon n="close" /></button>
          </div>
        </div>
        <div class="stage">
          <aside class="finder">
            <div class="fhead"><Icon n="pathfinder" /><span>PathFinder</span><button aria-label="Options"><Icon n="menu" /></button><button aria-label="Close PathFinder"><Icon n="thinx" /></button></div>
            <div class="node root"><Icon n="open6" /><Icon n="part" /><Icon n="lock" /><span>Spanner.par</span></div>
            <ul>
              <li v-for="(n, k) in tree" :key="k" class="node" :class="['d' + n.d, { off: n.off }]">
                <b class="exp"><Icon v-if="n.x" :n="n.x" /></b>
                <b v-if="n.d > 1" class="vis"><Icon v-if="n.e" :n="n.e" /></b>
                <b v-if="n.i" class="pic"><Icon :n="n.i" /></b>
                <span :class="{ hot: n.hot }">{{ n.t }}</span>
              </li>
            </ul>
            <div class="hbar"><button aria-label="Scroll left"><Icon n="left" /></button><div class="track"><div class="thumb"></div></div><button aria-label="Scroll right"><Icon n="right" /></button></div>
          </aside>

          <svg class="model" viewBox="132 219 1119 461" role="img" aria-label="Double ended spanner">
            <defs>
              <linearGradient id="side" x1="0" x2="1"><stop offset="0" stop-color="#a9aaad" /><stop offset=".5" stop-color="#bfc0c3" /><stop offset="1" stop-color="#b3b5b8" /></linearGradient>
              <linearGradient id="rail" gradientUnits="userSpaceOnUse" x1="615" y1="456" x2="606" y2="472"><stop offset="0" stop-color="#d0d2d5" /><stop offset=".2" stop-color="#77797c" /><stop offset=".4" stop-color="#c6c8cb" /><stop offset="1" stop-color="#97999c" /></linearGradient>
            </defs>
            <g fill="#e5e6e6">
              <path d="M313 345C326 376 362 398 420 393C480 400 520 428 573 457L620 485L700 528C750 556 750 575 762 592L768 570L620 455L430 372Z" />
              <path d="M365 288L372 296L444 317L446 310Z" />
              <path d="M760 580C766 633 850 650 898 637C904 632 898 628 890 624L840 620Z" />
              <path d="M838 587C850 572 865 573 885 579L925 592C940 595 941 588 929 578L864 566Z" />
            </g>
            <g stroke="#5f6265" stroke-width="1.400" stroke-linejoin="round">
              <path fill="url(#side)" d="M320 326L320 345C326 371 372 392 428 386L440 355L340 345Z" />
              <path fill="#b5b7ba" d="M368 269L368 291Q369 293 373 294L446 315Q451 304 449 293Z" />
              <path fill="url(#rail)" d="M391 374L423 368C455 373 480 384 527 407L730 524C748 535 760 550 767 565L766 583C760 566 750 551 728 538L600 463C560 438 510 412 473 398C440 386 420 384 391 378Z" />
              <path fill="#d5d6d9" d="M499 317C508 337 520 353 540 368C550 376 566 384 630 421L767 505C785 514 802 518 822 521C790 532 770 547 766 562C760 546 745 532 730 524L527 407C480 384 455 373 423 368C455 362 484 345 499 317Z" />
              <path fill="#d5d7da" d="M368 269C370 264 388 261 410 261C456 261 499 286 499 318C496 345 460 366 415 365C370 363 330 346 320 325C320 321 323 320 328 321L405 343C430 336 457 315 447 292L368 269Z" />
              <path fill="url(#side)" d="M766 562L767 592C779 619 813 637 850 636C867 636 882 633 889 630Q892 627 891 603L850 605Z" />
              <path fill="#adafb2" d="M864 547L864 570C850 572 841 577 833 586C819 575 836 549 864 547Z" />
              <path fill="#b9bbbe" d="M864 547L922 563L929 562L929 583Q927 587 922 586L864 570Z" />
              <path fill="#d5d7da" d="M864 547L922 563Q930 565 929 560C924 534 889 519 850 519C803 519 766 541 766 565C770 594 808 614 853 614C870 614 882 611 890 606Q892 603 888 601L833 586C819 573 836 549 864 547Z" />
            </g>
            <g fill="none" stroke="#67696c" stroke-width=".8">
              <path d="M321 329C333 350 370 366 415 368C457 368 488 351 499 323M767 568C773 596 808 616 853 617C870 617 882 614 890 609M371 271L371 293M444 293L444 314M869 549L869 571M921 564V586M888 608V629M864 547V570" />
              <path d="M501 323C509 340 522 355 542 371L630 424L767 508C785 516 802 519 816 523" />
              <path d="M423 368V371M391 374C420 374 470 385 527 413L728 531C748 542 759 555 766 575M391 376C430 378 480 392 527 417L728 535C748 548 757 557 765 579M527 407C525 412 525 417 526 422M730 524C728 530 728 534 729 538M424 368C460 361 490 346 501 324M395 374C450 378 500 395 527 408" />
              <path d="M526 401C510 393 499 386 500 378C502 369 519 369 531 374L748 499C757 505 758 511 754 515C748 520 737 518 730 514Z" />
              <path d="M532 376L750 501M531 379V374" />
            </g>
            <g class="cast" fill="#bfc1c4" stroke="#4d4f52" stroke-width=".8">
              <text transform="matrix(.87 .49 -.56 .62 558 414)">DROP FORGED</text>
              <text class="num" transform="matrix(.5 -.62 .87 .49 526 397)">17</text>
              <text class="num" transform="matrix(-.5 .62 -.87 -.49 733 494)">13</text>
            </g>
            <g stroke="#999b9d" stroke-linejoin="round">
              <path fill="#fff" d="M1187 578L1224 595L1187 616L1150 595Z" />
              <path fill="#fdfdfd" d="M1150 595L1187 616V658L1154 636Z" />
              <path fill="#eeeeef" d="M1224 595L1187 616V658L1221 636Z" />
            </g>
            <g class="faces">
              <text transform="matrix(.85 .48 -.6 .5 1178 594)">TOP</text>
              <text transform="matrix(.86 .48 .05 1 1156 624)">FRONT</text>
              <text transform="matrix(.86 -.5 -.05 1 1193 637)">RIGHT</text>
            </g>
            <path d="M1187 616V598" stroke="#8583df" stroke-width="1.500" /><path d="M1185 600L1187 595L1189 600Z" fill="#7774e0" />
            <path d="M1187 616L1202 608" stroke="#62bd61" stroke-width="1.500" /><path d="M1198 608L1204 607L1201 611Z" fill="#54b355" />
            <path d="M1187 616L1203 625" stroke="#d16160" stroke-width="1.500" /><path d="M1200 625L1206 626L1202 621Z" fill="#cb5555" />
            <circle cx="1187" cy="616" r="3" fill="#b5a541" />
          </svg>
        </div>
      </div>
      <div class="rail">
        <button v-for="r in rail" :key="r" :aria-label="r"><Icon :n="r" /></button>
        <span>Explode PathFinder</span>
      </div>
    </div>

    <footer class="status">
      <output>0 items are selected</output>
      <div class="stools">
        <button v-for="s in statusTools" :key="s" :aria-label="s"><Icon :n="s" /></button>
        <button class="round" aria-label="Zoom out"><Icon n="minus" /></button>
        <input v-model="zoomLevel" type="range" min="0" max="100" aria-label="Zoom" />
        <button class="round" aria-label="Zoom in"><Icon n="plus" /></button>
        <button class="round" aria-label="Record"><Icon n="record" /></button>
      </div>
    </footer>
  </div>
</template>

<style>
body { margin: 0; background: #000; }
</style>

<style scoped>
* { box-sizing: border-box; }
.app { height: 100vh; padding: 20px 0; background: #000; display: flex; flex-direction: column; font: 11px/16px "Noto Sans", "Open Sans", sans-serif; color: #111; overflow: hidden; }
button { font: inherit; color: inherit; background: none; border: 0; padding: 0; margin: 0; display: flex; align-items: center; justify-content: center; }
svg { flex: none; display: block; }
h1, h2, p, ul { margin: 0; padding: 0; font-size: inherit; font-weight: 400; }
.head { background: linear-gradient(90deg, #006487 0, #006487 45%, #16789b 62%, #4f9dba 100%); color: #fff; flex: none; height: 55px; display: flex; flex-direction: column; }
.titlebar { display: grid; grid-template-columns: 1fr auto 1fr; height: 32px; }
.titlebar h1 { align-self: center; font-size: 13px; }
.quick { display: flex; align-items: center; padding-left: 6px; height: 28px; }
.logo { width: 24px; height: 24px; background: #2a449c; border: 1px solid #d5ddf2; font: 700 13px/20px "Open Sans", sans-serif; margin-right: 20px; justify-content: flex-start; padding-left: 2px; align-self: flex-end; }
.qb { width: 21px; }
.qc { width: 10px; }
.wctl { display: flex; justify-content: flex-end; align-items: center; }
.wctl strong { font: 800 11px/16px "Open Sans", sans-serif; margin-right: 6px; }
.wctl button { width: 31px; }
.tabs { display: flex; align-items: center; height: 23px; padding: 0 1px 0 0; font-size: 12px; }
.file { width: 55px; margin-right: 7px; font-size: 13px; }
.tab { padding: 2px 14px 0; margin-right: 2px; height: 21px; border-bottom: 2px solid transparent; flex: none; }
.tab.on { color: #f5e88c; border-color: #e9d75c; }
.search { margin-left: auto; width: 132px; height: 19px; background: #fff; display: flex; align-items: center; flex: none; padding-right: 1px; }
.search input { border: 0; padding: 0 0 0 3px; min-width: 0; flex: 1; font: inherit; font-size: 11px; color: #111; outline: 0; background: none; }
.help { display: flex; align-items: center; margin-left: 42px; height: 20px; align-self: flex-start; }
.help button { width: 21px; }
.help .sm { width: 16px; }
.help .sm svg { width: 9px; height: 9px; }
.help .q { font-size: 15px; font-weight: 700; }

.ribbon { flex: none; height: 87px; background: #fefefe; display: flex; padding: 6px 0 5px; border-bottom: 1px solid #aeb0b1; }
.group { display: flex; flex-direction: column; border-right: 1px solid #dcdcdc; flex: none; }
.group h2 { text-align: center; line-height: 16px; }
.body { flex: 0 0 60px; display: flex; align-items: flex-start; }
.big { flex-direction: column; justify-content: flex-start; position: relative; width: 46px; line-height: 11px; }
.big > svg:first-child { height: 34px; margin-bottom: 4px; }
.big span svg { display: inline-block; width: 8px; height: 8px; }
.below { margin-top: 4px; }
.dim { color: #a8a8a8; }
.tiny { width: 21px; height: 21px; flex: none; }
.show { width: 76px; } .show .body { padding-left: 5px; } .show h2 { padding-left: 5px; }
.clip { width: 95px; } .clip .body { padding-left: 4px; } .clip .big + .big { margin-left: -3px; }
.views { width: 128px; padding: 0 2px 0 5px; } .views .wide { width: 76px; }
.orient { width: 158px; } .orient .body { padding-left: 5px; } .orient .big { width: 42px; }
.grid3 { display: grid; grid-template-columns: repeat(3, 21px); align-self: flex-start; margin-top: -3px; }
.style { width: 383px; }
.vs { width: 53px; border-right: 1px solid #dcdcdc; }
.style .body { align-items: stretch; }
.cubes { display: grid; grid-template-columns: 20px 24px 8px 22px; justify-items: center; align-content: start; padding-left: 3px; margin-top: -3px; width: 80px; border-right: 1px solid #dcdcdc; }
.cubes .sel { background: #cfeaf5; width: 20px; }
.car { height: 21px; }
.rows { display: flex; flex-direction: column; gap: 1px; }
.rows.left { width: 99px; padding-left: 5px; }
.rows button { height: 18px; gap: 3px; justify-content: flex-start; flex: none; white-space: nowrap; }
.rows:not(.left) { padding-left: 7px; }
.pick { position: relative; width: 139px; height: 20px; }
.pick select { appearance: none; width: 100%; height: 100%; border: 1px solid #a9a9a9; background: #fff; font: inherit; color: inherit; padding: 0 2px; margin: 0; }
.pick svg { position: absolute; right: 3px; top: 6px; color: #666; }
.pick.off { width: 130px; } .pick.off select { border-color: #ddd; } .pick.off svg { color: #bbb; }
.config { width: 162px; } .config .body { flex-direction: column; padding: 5px 0 0 6px; }
.crow { display: flex; }
.crow.tools { margin-top: 6px; }
.windowg { width: 51px; } .windowg .big { width: 50px; }
.wi { padding-bottom: 8px; }

.middle { flex: 1; min-height: 0; display: flex; background: #fbfbfc; }
.work { flex: 1; min-width: 0; display: flex; flex-direction: column; }
.prompt { height: 25px; flex: none; display: flex; align-items: center; background: #fff; border-bottom: 2px solid #d5d5d5; padding-left: 5px; }
.prompt p { flex: 1; margin: 0 6px 0 10px; border-left: 1px solid #8a8a8a; height: 20px; line-height: 18px; padding-left: 1px; white-space: nowrap; font-family: "Open Sans", sans-serif; font-size: 13px; }
.docs { height: 32px; flex: none; display: flex; background: #fff; border-bottom: 1px solid #17597c; padding-left: 2px; align-items: flex-end; justify-content: space-between; }
.doctab { display: flex; align-items: center; width: 130px; height: 28px; background: #006487; color: #fff; padding: 0 4px 0 18px; }
.doctab span { margin-left: 4px; flex: 1; }
.docnav { display: flex; align-self: center; padding: 0 1px 2px 0; }
.docnav button { width: 14px; height: 16px; color: #111; }
.stage { flex: 1; min-height: 0; display: flex; }
.finder { width: 132px; flex: none; background: #fff; border-left: 1px solid #d8dde0; border-right: 2px solid #dfe3e6; overflow: hidden; display: flex; flex-direction: column; color: #2a2a2a; padding: 0 1px 4px 1px; }
.fhead { height: 22px; display: flex; align-items: center; padding: 0 0 1px 4px; flex: none; }
.fhead span { margin: 0 6px 0 5px; }
.fhead button { width: 18px; }
.node { display: flex; align-items: center; height: 16px; white-space: nowrap; overflow: hidden; flex: none; }
.root { padding-left: 3px; gap: 4px; }
.root span { margin-left: 2px; }
.off { color: #8c8c8c; }
.node b { flex: none; display: flex; justify-content: center; }
.exp { width: 19px; margin-left: 13px; }
.vis { width: 18px; }
.pic { width: 22px; margin-right: 2px; }
.d3 .vis { margin-left: 23px; }
.d1 span { flex: 1; padding-left: 3px; margin-left: 3px; line-height: 14px; background: #fdd998; outline: 1px solid #f2cd88; outline-offset: -1px; }
ul { list-style: none; }
.hbar { margin-top: auto; height: 15px; display: flex; background: #f0f0f0; flex: none; margin-left: 1px; }
.hbar button { width: 17px; }
.track { flex: 1; }
.thumb { width: 56%; height: 15px; background: #d2d2d2; }
.model { flex: 1; min-width: 0; height: 100%; }
.cast text { font: italic 700 20px "Liberation Serif", serif; }
.cast .num { font-style: normal; }
.faces text { font: 10px "Liberation Sans", sans-serif; fill: #555; }
.rail { width: 29px; flex: none; display: flex; flex-direction: column; align-items: center; padding-left: 5px; }
.rail button { height: 34px; width: 24px; flex: none; }
.rail span { writing-mode: vertical-rl; color: #c3c5c7; line-height: 14px; margin-top: -4px; white-space: nowrap; font-size: 12px; }

.status { flex: none; height: 20px; background: #006487; color: #fff; display: flex; align-items: center; justify-content: flex-end; }
.status output { margin-right: 105px; }
.stools { display: flex; align-items: center; padding-right: 2px; }
.stools button { width: 22px; }
.stools .round { width: 20px; }
.stools input { appearance: none; width: 114px; height: 14px; margin: 0; background: linear-gradient(#fff, #fff) center / 100% 1px no-repeat; }
.stools input::-webkit-slider-thumb { appearance: none; width: 7px; height: 11px; background: #e8edf0; border-radius: 0 0 3px 3px; }
</style>
